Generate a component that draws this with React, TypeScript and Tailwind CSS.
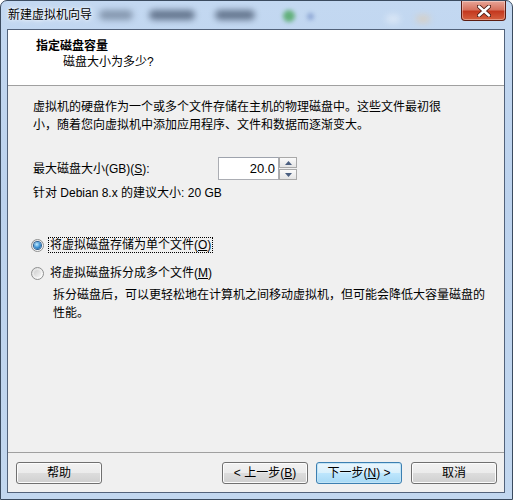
const F = "font-['Liberation_Sans','Noto_Sans_CJK_SC',sans-serif]";

function Btn({ children, primary }: { children: React.ReactNode; primary?: boolean }) {
  return (
    <div
      className={
        "w-[86px] h-[22px] rounded-[3px] border flex items-center justify-center text-[12px] text-black " +
        (primary
          ? "border-[#3c7fb1] bg-[linear-gradient(#eaf6fd,#d9f0fc_50%,#bee6fd_50%,#a7d9f5)] shadow-[inset_0_0_0_1px_#c2e4f6]"
          : "border-[#707070] bg-[linear-gradient(#f2f2f2,#ebebeb_50%,#dddddd_50%,#cfcfcf)] shadow-[inset_0_0_0_1px_#fcfcfc]")
      }
    >
      {children}
    </div>
  );
}

function Radio({ checked }: { checked?: boolean }) {
  return (
    <div className="w-[13px] h-[13px] rounded-full border border-[#8e8f8f] bg-[linear-gradient(135deg,#dcdcdc,#ffffff)] flex items-center justify-center shrink-0">
      {checked ? (
        <div className="w-[7px] h-[7px] rounded-full bg-[radial-gradient(circle_at_40%_35%,#c4ecff,#3d94d6_50%,#174a82)] shadow-[0_0_0_1px_#2a5f93]" />
      ) : (
        <div className="w-[7px] h-[7px] rounded-full bg-[linear-gradient(135deg,#cfcfcf,#f4f4f4)]" />
      )}
    </div>
  );
}

function Tri({ up }: { up?: boolean }) {
  return (
    <svg width="7" height="4" viewBox="0 0 7 4">
      {up ? <path d="M0 4 L3.5 0 L7 4 Z" fill="#4b5f80" /> : <path d="M0 0 L3.5 4 L7 0 Z" fill="#4b5f80" />}
    </svg>
  );
}

export default function App() {
  return (
    <div className={"w-[513px] h-[500px] overflow-hidden bg-white " + F}>
      <div className="relative w-[513px] h-[500px] flex flex-col rounded-t-[7px] border border-[#3b4b5f] bg-[linear-gradient(180deg,#c3d8f1,#bcd2ed_40%,#c2d7ef)] pl-[6px] pr-[7px] pb-[6px]">
        {/* blurred background behind glass */}
        <div className="absolute left-[98px] top-[9px] w-[34px] h-[10px] rounded-full bg-[#4a5a70] opacity-50 blur-[3px]" />
        <div className="absolute left-[148px] top-[9px] w-[46px] h-[10px] rounded-full bg-[#3e4e66] opacity-70 blur-[3px]" />
        <div className="absolute left-[214px] top-[9px] w-[40px] h-[10px] rounded-full bg-[#3e4e66] opacity-70 blur-[3px]" />
        <div className="absolute left-[282px] top-[9px] w-[12px] h-[12px] rounded-full bg-[#3aa04a] opacity-70 blur-[2px]" />
        <div className="absolute left-[306px] top-[12px] w-[7px] h-[7px] rounded-full bg-[#6a86c2] opacity-60 blur-[2px]" />
        <div className="absolute left-[385px] top-[14px] w-[14px] h-[8px] rounded-full bg-[#ffffff] opacity-40 blur-[3px]" />
        <div className="absolute left-[415px] top-[14px] w-[14px] h-[8px] rounded-full bg-[#e8c9a0] opacity-50 blur-[3px]" />

        {/* title bar */}
        <div className="relative h-[28px] flex items-center pl-[1px]">
          <span className="text-[12px] text-black [text-shadow:0_0_6px_#ffffff,0_0_3px_#ffffff]">新建虚拟机向导</span>
        </div>
        <div className="absolute top-0 right-[6px] w-[45px] h-[20px] rounded-b-[4px] border border-t-0 border-[#5c1c12] bg-[linear-gradient(180deg,#e8a597,#d7735f_45%,#c4391f_55%,#d5603f)] shadow-[inset_0_0_0_1px_rgba(255,255,255,0.35)] flex items-center justify-center">
          <svg width="14" height="12" viewBox="0 0 14 12">
            <path d="M2 1.5 L12 10.5 M12 1.5 L2 10.5" stroke="#4a1a12" strokeWidth="4.2" strokeLinecap="round" />
            <path d="M2 1.5 L12 10.5 M12 1.5 L2 10.5" stroke="#ffffff" strokeWidth="2.4" strokeLinecap="round" />
          </svg>
        </div>

        {/* client */}
        <div className="relative flex-1 flex flex-col border border-[#52627a] bg-[#f0f0f0]">
          {/* header */}
          <div className="h-[56px] bg-white border-b border-[#a0a0a0] pt-[8px] pl-[28px] shrink-0">
            <div className="text-[12px] leading-[16px] font-bold text-black">指定磁盘容量</div>
            <div className="text-[12px] leading-[16px] text-black pl-[27px]">磁盘大小为多少?</div>
          </div>

          {/* body */}
          <div className="flex-1 flex flex-col pl-[25px] text-[12px] text-black">
            <div className="mt-[12px] leading-[18px]">
              虚拟机的硬盘作为一个或多个文件存储在主机的物理磁盘中。这些文件最初很
              <br />
              小，随着您向虚拟机中添加应用程序、文件和数据而逐渐变大。
            </div>

            <div className="mt-[23px] h-[23px] flex items-center">
              <div className="w-[185px]">
                最大磁盘大小(GB)(<span className="underline">S</span>):
              </div>
              <div className="h-[23px] w-[61px] border border-[#abadb3] border-t-[#9ea3ad] bg-white flex items-center justify-end pr-[3px] text-[13px]">
                20.0
              </div>
              <div className="h-[23px] w-[18px] flex flex-col justify-between py-[0px]">
                <div className="h-[11px] w-[18px] border border-[#a9a9a9] bg-[linear-gradient(#fbfbfb,#e4e4e4)] flex items-center justify-center">
                  <Tri up />
                </div>
                <div className="h-[11px] w-[18px] border border-[#a9a9a9] bg-[linear-gradient(#fbfbfb,#e4e4e4)] flex items-center justify-center">
                  <Tri />
                </div>
              </div>
            </div>

            <div className="mt-[5px] leading-[16px]">针对 Debian 8.x 的建议大小: 20 GB</div>

            <div className="mt-[35px] h-[18px] flex items-center ml-[-2px]">
              <Radio checked />
              <div className="ml-[4px] h-[16px] px-[1px] flex items-center border border-dotted border-black">
                将虚拟磁盘存储为单个文件(<span className="underline">O</span>)
              </div>
            </div>

            <div className="mt-[10px] h-[18px] flex items-center ml-[-2px]">
              <Radio />
              <div className="ml-[5px] h-[16px] px-[1px] flex items-center">
                将虚拟磁盘拆分成多个文件(<span className="underline">M</span>)
              </div>
            </div>

            <div className="mt-[4px] pl-[20px] leading-[18px]">
              拆分磁盘后，可以更轻松地在计算机之间移动虚拟机，但可能会降低大容量磁盘的
              <br />
              性能。
            </div>

            <div className="flex-1" />
          </div>

          {/* footer */}
          <div className="shrink-0 border-t border-[#a0a0a0] pt-[9px] pb-[8px] pl-[8px] pr-[7px] flex items-center justify-between">
            <Btn>帮助</Btn>
            <div className="flex items-center">
              <Btn>
                &lt; 上一步(<span className="underline">B</span>)
              </Btn>
              <div className="ml-[8px]">
                <Btn primary>
                  下一步(<span className="underline">N</span>) &gt;
                </Btn>
              </div>
              <div className="ml-[9px]">
                <Btn>取消</Btn>
              </div>
            </div>
          </div>
        </div>
      </div>
    </div>
  );
}
